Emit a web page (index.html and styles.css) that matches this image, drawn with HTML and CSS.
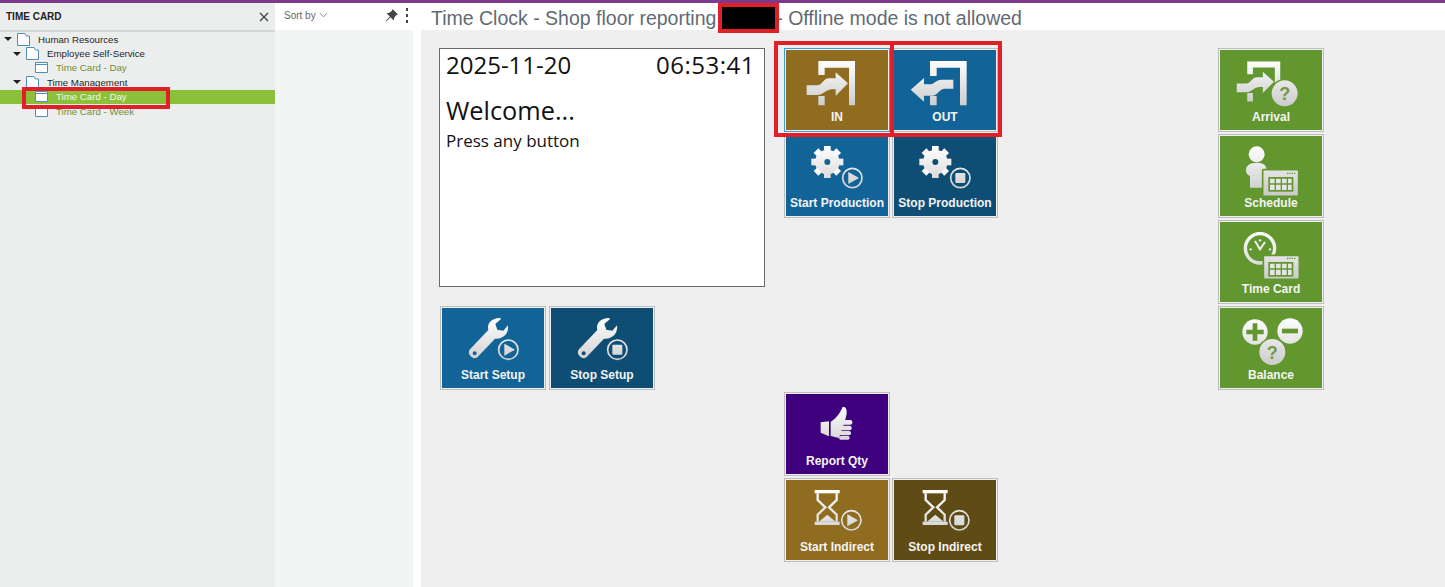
FILE: index.html
```html
<!DOCTYPE html>
<html lang="en">
<head>
    <meta charset="UTF-8">
    <title>Time Clock</title>
    <link rel="stylesheet" href="styles.css">
</head>
<body>
    <svg class="defs" aria-hidden="true">
        <defs>
            <linearGradient id="shine" gradientUnits="userSpaceOnUse" x1="0" y1="30" x2="0" y2="185">
                <stop offset="0%" stop-color="#ffffff" />
                <stop offset="100%" stop-color="#c6c6c6" />
            </linearGradient>
            <symbol id="door-in" viewBox="0 0 318 186">
                <path d="M103 33H213V166H195V53H122V75H103ZM103 138H122V166H103Z" />
                <path d="M68 106H100C115 106 118 85 135 85H155V67L192 100L155 138V118H145C125 118 120 135 100 135H68Z" />
            </symbol>
            <symbol id="door-out" viewBox="0 0 318 186">
                <path d="M114 33H224V166H204V53H134V78H114ZM114 138H134V166H114Z" />
                <path d="M56 119L96 84V103H112C128 103 130 89 150 89H184V116H160C140 116 138 137 120 137H96V155Z" />
            </symbol>
            <symbol id="gear" viewBox="0 0 318 186">
                <circle class="ring" cx="130" cy="78" r="23" stroke-width="28" />
                <rect x="120" y="30" width="20" height="14" />
                <rect x="120" y="112" width="20" height="14" />
                <rect x="82" y="68" width="14" height="20" />
                <rect x="164" y="68" width="14" height="20" />
                <rect x="120" y="30" width="20" height="14" transform="rotate(45 130 78)" />
                <rect x="120" y="30" width="20" height="14" transform="rotate(135 130 78)" />
                <rect x="120" y="30" width="20" height="14" transform="rotate(225 130 78)" />
                <rect x="120" y="30" width="20" height="14" transform="rotate(315 130 78)" />
            </symbol>
            <symbol id="wrench" viewBox="0 0 318 186">
                <path fill-rule="evenodd" d="M90 124L145 66C140 45 155 30 180 30L183 33L166 48L172 65L190 68L204 52C208 75 190 95 165 92L112 148C100 158 78 138 90 124ZM104 130a6 6 0 1 0 .1 0Z" />
            </symbol>
            <symbol id="hourglass" viewBox="0 0 318 186">
                <rect x="92" y="30" width="75" height="10" />
                <rect x="92" y="125" width="75" height="10" />
                <path class="line" d="M101 40V60L124 82L101 104V125M158 40V60L135 82L158 104V125" stroke-width="7" />
                <path d="M105 125L130 104L155 125Z" />
            </symbol>
            <symbol id="thumb" viewBox="0 0 318 186">
                <path d="M110 85L135 82V127L110 116Z" />
                <path d="M140 84C158 72 170 55 175 40C188 34 192 55 184 76L165 132L140 126Z" />
                <rect x="165" y="78" width="40" height="14" rx="6" />
                <rect x="165" y="95" width="38" height="14" rx="6" />
                <rect x="165" y="111" width="36" height="13" rx="6" />
                <rect x="165" y="126" width="32" height="11" rx="5" />
            </symbol>
        </defs>
    </svg>

    <div class="topbar"></div>

    <div class="app">
        <aside class="nav">
            <div class="nav-head">
                <span class="nav-title">TIME CARD</span>
                <svg class="close" viewBox="0 0 10 10"><path d="M1 1L9 9M9 1L1 9" /></svg>
            </div>
            <ul class="tree">
                <li class="node lvl-0"><i class="caret"></i><svg class="ico"><path class="folder" d="M1.500 .5H9L10.500 3H13.500V12.500H1.500Z" /></svg><span>Human Resources</span></li>
                <li class="node lvl-1"><i class="caret"></i><svg class="ico"><path class="folder" d="M1.500 .5H9L10.500 3H13.500V12.500H1.500Z" /></svg><span>Employee Self-Service</span></li>
                <li class="node lvl-2 page"><svg class="ico"><path class="window" d="M.5 1.500H12.500V11.500H.5ZM.5 3.500H12.500" /></svg><span>Time Card - Day</span></li>
                <li class="node lvl-1"><i class="caret"></i><svg class="ico"><path class="folder" d="M1.500 .5H9L10.500 3H13.500V12.500H1.500Z" /></svg><span>Time Management</span></li>
                <li class="node lvl-2 page selected"><svg class="ico"><path class="window" d="M.5 1.500H12.500V11.500H.5ZM.5 3.500H12.500" /></svg><span>Time Card - Day</span></li>
                <li class="node lvl-2 page"><svg class="ico"><path class="window" d="M.5 1.500H12.500V11.500H.5ZM.5 3.500H12.500" /></svg><span>Time Card - Week</span></li>
            </ul>
        </aside>

        <aside class="filter">
            <div class="filter-head">
                <span class="sort">Sort by</span>
                <svg class="chevron" viewBox="0 0 10 6"><path d="M1 1L5 5L9 1" /></svg>
                <svg class="pin" viewBox="0 0 12 12"><path d="M7 0L12 5L10.500 5.500L8.500 8L8 10.500L5 7.500L1 11.500L.5 11L4.500 7L1.500 4L4 3.500L6.500 1.500Z" /></svg>
                <span class="kebab"><i></i><i></i><i></i></span>
            </div>
            <div class="filter-body"></div>
        </aside>

        <main class="main">
            <h1 class="page-title">Time Clock - Shop floor reporting <span class="redacted"></span> - Offline mode is not allowed</h1>

            <div class="board">
                <div class="col-left">
                    <div class="clock">
                        <div class="clock-top"><span>2025-11-20</span><span class="time">06:53:41</span></div>
                        <div class="welcome">Welcome...</div>
                        <div class="hint">Press any button</div>
                    </div>
                    <div class="setup">
                        <div class="tile blue">
                            <svg class="icon" viewBox="0 0 318 186"><use href="#wrench" /><circle class="line" cx="205" cy="125" r="29" stroke-width="5" /><path d="M193 107L225 125L193 143Z" /></svg>
                            <span>Start Setup</span>
                        </div>
                        <div class="tile navy">
                            <svg class="icon" viewBox="0 0 318 186"><use href="#wrench" /><circle class="line" cx="205" cy="125" r="29" stroke-width="5" /><rect x="190" y="110" width="30" height="30" rx="3" /></svg>
                            <span>Stop Setup</span>
                        </div>
                    </div>
                </div>

                <div class="col-mid">
                    <div class="tile ochre focused">
                        <svg class="icon" viewBox="0 0 318 186"><use href="#door-in" /></svg>
                        <span>IN</span>
                    </div>
                    <div class="tile blue">
                        <svg class="icon" viewBox="0 0 318 186"><use href="#door-out" /></svg>
                        <span>OUT</span>
                    </div>
                    <div class="tile blue">
                        <svg class="icon" viewBox="0 0 318 186"><use href="#gear" /><circle class="line" cx="205" cy="126" r="29" stroke-width="5" /><path d="M193 108L225 126L193 144Z" /></svg>
                        <span>Start Production</span>
                    </div>
                    <div class="tile navy">
                        <svg class="icon" viewBox="0 0 318 186"><use href="#gear" /><circle class="line" cx="205" cy="126" r="29" stroke-width="5" /><rect x="190" y="111" width="30" height="30" rx="3" /></svg>
                        <span>Stop Production</span>
                    </div>
                    <div class="tile purple row-5">
                        <svg class="icon" viewBox="0 0 318 186"><use href="#thumb" /></svg>
                        <span>Report Qty</span>
                    </div>
                    <div class="tile ochre row-6">
                        <svg class="icon" viewBox="0 0 318 186"><use href="#hourglass" /><circle class="line" cx="202" cy="121" r="29" stroke-width="5" /><path d="M190 103L222 121L190 139Z" /></svg>
                        <span>Start Indirect</span>
                    </div>
                    <div class="tile umber row-6">
                        <svg class="icon" viewBox="0 0 318 186"><use href="#hourglass" /><circle class="line" cx="202" cy="121" r="29" stroke-width="5" /><rect x="187" y="106" width="30" height="30" rx="3" /></svg>
                        <span>Stop Indirect</span>
                    </div>
                </div>

                <div class="col-right">
                    <div class="tile green">
                        <svg class="icon" viewBox="0 0 318 186">
                            <g transform="translate(-5 5) scale(.9)"><use href="#door-in" width="318" height="186" /></g>
                            <circle class="ringed" cx="200" cy="130" r="41" />
                            <text class="qmark" x="200" y="150">?</text>
                        </svg>
                        <span>Arrival</span>
                    </div>
                    <div class="tile green">
                        <svg class="icon" viewBox="0 0 318 186">
                            <circle cx="116" cy="55" r="24" />
                            <path d="M84 104C84 88 94 80 116 80C138 80 146 88 146 104V155H96V120C90 118 84 112 84 104Z" />
                            <rect class="screen" x="134" y="101" width="108" height="80" rx="3" />
                            <rect class="keys" x="151" y="123" width="75" height="44" />
                            <path class="cells" d="M156 128h14v14h-14zM174 128h14v14h-14zM192 128h14v14h-14zM210 128h11v14h-11zM156 146h14v16h-14zM174 146h14v16h-14zM192 146h14v16h-14zM210 146h11v16h-11z" />
                            <path class="keys" d="M207 110h4v4h-4zM214 110h4v4h-4zM221 110h4v4h-4zM228 110h4v4h-4z" />
                        </svg>
                        <span>Schedule</span>
                    </div>
                    <div class="tile green">
                        <svg class="icon" viewBox="0 0 318 186">
                            <circle class="line" cx="126" cy="79" r="44" stroke-width="10" />
                            <path class="line" d="M111 57L126 82L141 60" stroke-width="6" />
                            <circle cx="98" cy="82" r="3.500" />
                            <circle cx="126" cy="55" r="3.500" />
                            <circle cx="156" cy="82" r="3.500" />
                            <rect class="screen" x="136" y="100" width="108" height="72" rx="3" />
                            <rect class="keys" x="151" y="120" width="75" height="44" />
                            <path class="cells" d="M156 125h14v14h-14zM174 125h14v14h-14zM192 125h14v14h-14zM210 125h11v14h-11zM156 143h14v16h-14zM174 143h14v16h-14zM192 143h14v16h-14zM210 143h11v16h-11z" />
                            <path class="keys" d="M207 107h4v4h-4zM214 107h4v4h-4zM221 107h4v4h-4zM228 107h4v4h-4z" />
                        </svg>
                        <span>Time Card</span>
                    </div>
                    <div class="tile green">
                        <svg class="icon" viewBox="0 0 318 186">
                            <circle cx="111" cy="72" r="38" />
                            <path class="mark" d="M85 72H137M111 46V98" stroke-width="14" />
                            <circle cx="216" cy="69" r="38" />
                            <path class="mark" d="M192 69H240" stroke-width="14" />
                            <circle class="ringed" cx="163" cy="132" r="41" />
                            <text class="qmark" x="163" y="152">?</text>
                        </svg>
                        <span>Balance</span>
                    </div>
                </div>
            </div>
        </main>
    </div>

    <!-- red annotations drawn over the screenshot -->
    <div class="callout callout-nav"></div>
    <div class="callout callout-id"></div>
    <div class="callout callout-in"></div>
    <div class="callout callout-out"></div>
</body>
</html>
```

FILE: styles.css
```css
* {
    margin: 0;
    padding: 0;
    box-sizing: border-box;
}

html,
body {
    height: 587px;
    overflow: hidden;
}

body {
    position: relative;
    display: flex;
    flex-direction: column;
    background: #fff;
    font-family: "Liberation Sans", Arial, sans-serif;
}

.defs {
    display: block;
    width: 0;
    height: 0;
}

.topbar {
    height: 3px;
    background: #7d3a8c;
    flex: none;
}

.app {
    display: flex;
    flex: 1;
    min-height: 0;
}

/* left tree */
.nav {
    width: 275px;
    flex: none;
    background: #eceeee;
}

.nav-head {
    height: 29px;
    display: flex;
    align-items: center;
    justify-content: space-between;
    padding: 0 6px;
    border-bottom: 2px solid #d4d6d6;
}

.nav-title {
    font-size: 10px;
    font-weight: 700;
    color: #222;
}

.close {
    width: 10px;
    height: 10px;
    fill: none;
    stroke: #444;
    stroke-width: 1.3;
}

.tree {
    list-style: none;
}

.node {
    height: 14.4px;
    display: flex;
    align-items: center;
    font-size: 9.700px;
    color: #1f1f1f;
    position: relative;
}

.lvl-0 {
    padding-left: 4px;
}

.lvl-1 {
    padding-left: 13px;
}

.lvl-2 {
    padding-left: 35px;
}

.page {
    color: #6d8f37;
}

.selected {
    background: #8dc03a;
    color: #f2f8e4;
}

.caret {
    width: 0;
    height: 0;
    border-left: 4px solid transparent;
    border-right: 4px solid transparent;
    border-top: 4px solid #222;
    margin-right: 4px;
}

.ico {
    width: 14px;
    height: 13px;
    margin-right: 7px;
    flex: none;
}

.lvl-0 span {
    margin-left: 1px;
}

.lvl-1 span {
    margin-left: 1px;
}

.folder,
.window {
    fill: #fff;
    stroke: #4f8fb5;
    stroke-width: 1;
}

/* sort column */
.filter {
    width: 146px;
    flex: none;
    display: flex;
    flex-direction: column;
    padding-right: 8px;
}

.filter-head {
    height: 27px;
    display: flex;
    align-items: center;
    padding: 0 5px 3px 9px;
    color: #666;
    font-size: 10px;
}

.chevron {
    width: 9px;
    height: 6px;
    margin-left: 3px;
    fill: none;
    stroke: #777;
}

.pin {
    width: 13px;
    height: 13px;
    margin-left: auto;
    fill: #444;
}

.kebab {
    display: flex;
    flex-direction: column;
    gap: 3px;
    margin-left: 8px;
}

.kebab i {
    display: block;
    width: 2px;
    height: 3px;
    background: #444;
}

.filter-body {
    flex: 1;
    background: #f3f4f4;
}

/* main area */
.main {
    flex: 1;
    min-width: 0;
    display: flex;
    flex-direction: column;
}

.page-title {
    height: 27px;
    padding: 4px 0 0 10px;
    font-size: 19.500px;
    font-weight: 400;
    color: #5f6b72;
    white-space: nowrap;
}

.redacted {
    display: inline-block;
    width: 54px;
    height: 22px;
    margin-right: -5px;
    background: #000;
    vertical-align: -4px;
}

.board {
    flex: 1;
    display: flex;
    align-items: flex-start;
    background: #efefef;
    padding: 18px 0 0 18px;
}

.col-left {
    width: 345px;
    flex: none;
}

.clock {
    width: 326px;
    height: 239px;
    background: #fff;
    border: 1px solid #6b6b6b;
    padding: 0 9px 0 6px;
    font-family: "Open Sans", sans-serif;
    color: #111;
}

.clock-top {
    display: flex;
    justify-content: space-between;
    font-size: 24px;
    line-height: 32px;
}

.time {
    letter-spacing: .5px;
}

.welcome {
    font-size: 25.300px;
    line-height: 36px;
    margin-top: 11px;
}

.hint {
    font-size: 17px;
    line-height: 24px;
    margin-top: 1px;
}

.setup {
    display: flex;
    gap: 3px;
    margin-top: 19px;
    padding-left: 1px;
}

.col-mid {
    display: grid;
    grid-template-columns: 106px 106px;
    grid-auto-rows: 84px;
    gap: 2px;
    flex: none;
}

.row-5 {
    grid-row: 5;
    grid-column: 1;
}

.row-6 {
    grid-row: 6;
}

.col-right {
    display: flex;
    flex-direction: column;
    gap: 2px;
    margin-left: 220px;
}

/* tiles */
.tile {
    width: 106px;
    height: 84px;
    flex: none;
    display: flex;
    flex-direction: column;
    align-items: center;
    border: 1px solid #bdbdbd;
    outline: 1px solid #efefef;
    outline-offset: -2px;
    color: #f4f4f4;
    font-size: 12px;
    font-weight: 700;
    white-space: nowrap;
    padding: 1px;
    background-clip: padding-box;
}

.icon {
    width: 106px;
    height: 62px;
    flex: none;
    fill: url(#shine);
}

.tile span {
    line-height: 14px;
    margin-top: -2px;
}

.focused {
    border-color: #3f9ad6;
}

.blue {
    background-color: #126498;
}

.navy {
    background-color: #0f4e74;
}

.ochre {
    background-color: #8f6c20;
}

.umber {
    background-color: #5f4b15;
}

.green {
    background-color: #62972f;
}

.purple {
    background-color: #3f007e;
}

.line,
.ring {
    fill: none;
    stroke: url(#shine);
}

.screen {
    stroke: #62972f;
    stroke-width: 5;
}

.icon .keys {
    fill: #62972f;
}

.cells {
    fill: #e4e6e2;
}

.mark {
    fill: none;
    stroke: #62972f;
}

.ringed {
    stroke: #62972f;
    stroke-width: 4;
}

.icon .qmark {
    font-size: 54px;
    font-weight: 700;
    fill: #6f9a48;
    text-anchor: middle;
}

/* red annotations */
.callout {
    position: absolute;
    border: 4px solid #e01f26;
}

.callout-nav {
    left: 22px;
    top: 87px;
    width: 148px;
    height: 22px;
}

.callout-id {
    left: 718px;
    top: 3px;
    width: 61px;
    height: 30px;
}

.callout-in {
    left: 774px;
    top: 41px;
    width: 120px;
    height: 96px;
}

.callout-out {
    left: 890px;
    top: 41px;
    width: 112px;
    height: 96px;
}
```
